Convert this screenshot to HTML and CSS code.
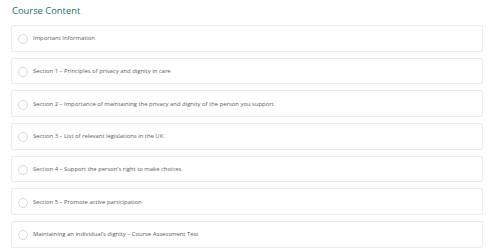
FILE: index.html
```html
<!DOCTYPE html>
<html lang="en">
<head>
    <meta charset="UTF-8">
    <meta name="viewport" content="width=device-width, initial-scale=1.0">
    <title>Course Content</title>
    <link rel="stylesheet" href="styles.css">
</head>
<body>
    <div class="course-content">
        <h2>Course Content</h2>
        <ul class="lessons">
            <li class="lesson"><span class="status"></span>Important Information</li>
            <li class="lesson"><span class="status"></span>Section 1 – Principles of privacy and dignity in care</li>
            <li class="lesson"><span class="status"></span>Section 2 – Importance of maintaining the privacy and dignity of the person you support</li>
            <li class="lesson"><span class="status"></span>Section 3 – List of relevant legislations in the UK</li>
            <li class="lesson"><span class="status"></span>Section 4 – Support the person’s right to make choices</li>
            <li class="lesson"><span class="status"></span>Section 5 – Promote active participation</li>
            <li class="lesson"><span class="status"></span>Maintaining an individual’s dignity – Course Assessment Test</li>
        </ul>
    </div>
</body>
</html>
```

FILE: styles.css
```css
body {
    margin: 0;
    background-color: #fff;
    font-family: "Open Sans", Arial, sans-serif;
}
.course-content {
    padding: 4px 17px 0 11px;
}
h2 {
    margin: 0 0 7px 1px;
    font-size: 9.4px;
    font-weight: 500;
    line-height: 14px;
    color: #24706f;
}
.lessons {
    list-style-type: none;
    margin: 0;
    padding: 0;
    display: flex;
    flex-direction: column;
    gap: 6px;
}
.lesson {
    box-sizing: border-box;
    height: 26.7px;
    display: flex;
    align-items: center;
    gap: 5px;
    padding: 0 6px;
    border: 1px solid #e9ecf1;
    border-radius: 2px;
    background-color: #fff;
    font-size: 5.9px;
    font-weight: 500;
    color: #5c5c5c;
}
.status {
    width: 8px;
    height: 8px;
    margin-top: 2px;
    border: 1px solid #d4d8de;
    border-radius: 50%;
    flex-shrink: 0;
}
```
